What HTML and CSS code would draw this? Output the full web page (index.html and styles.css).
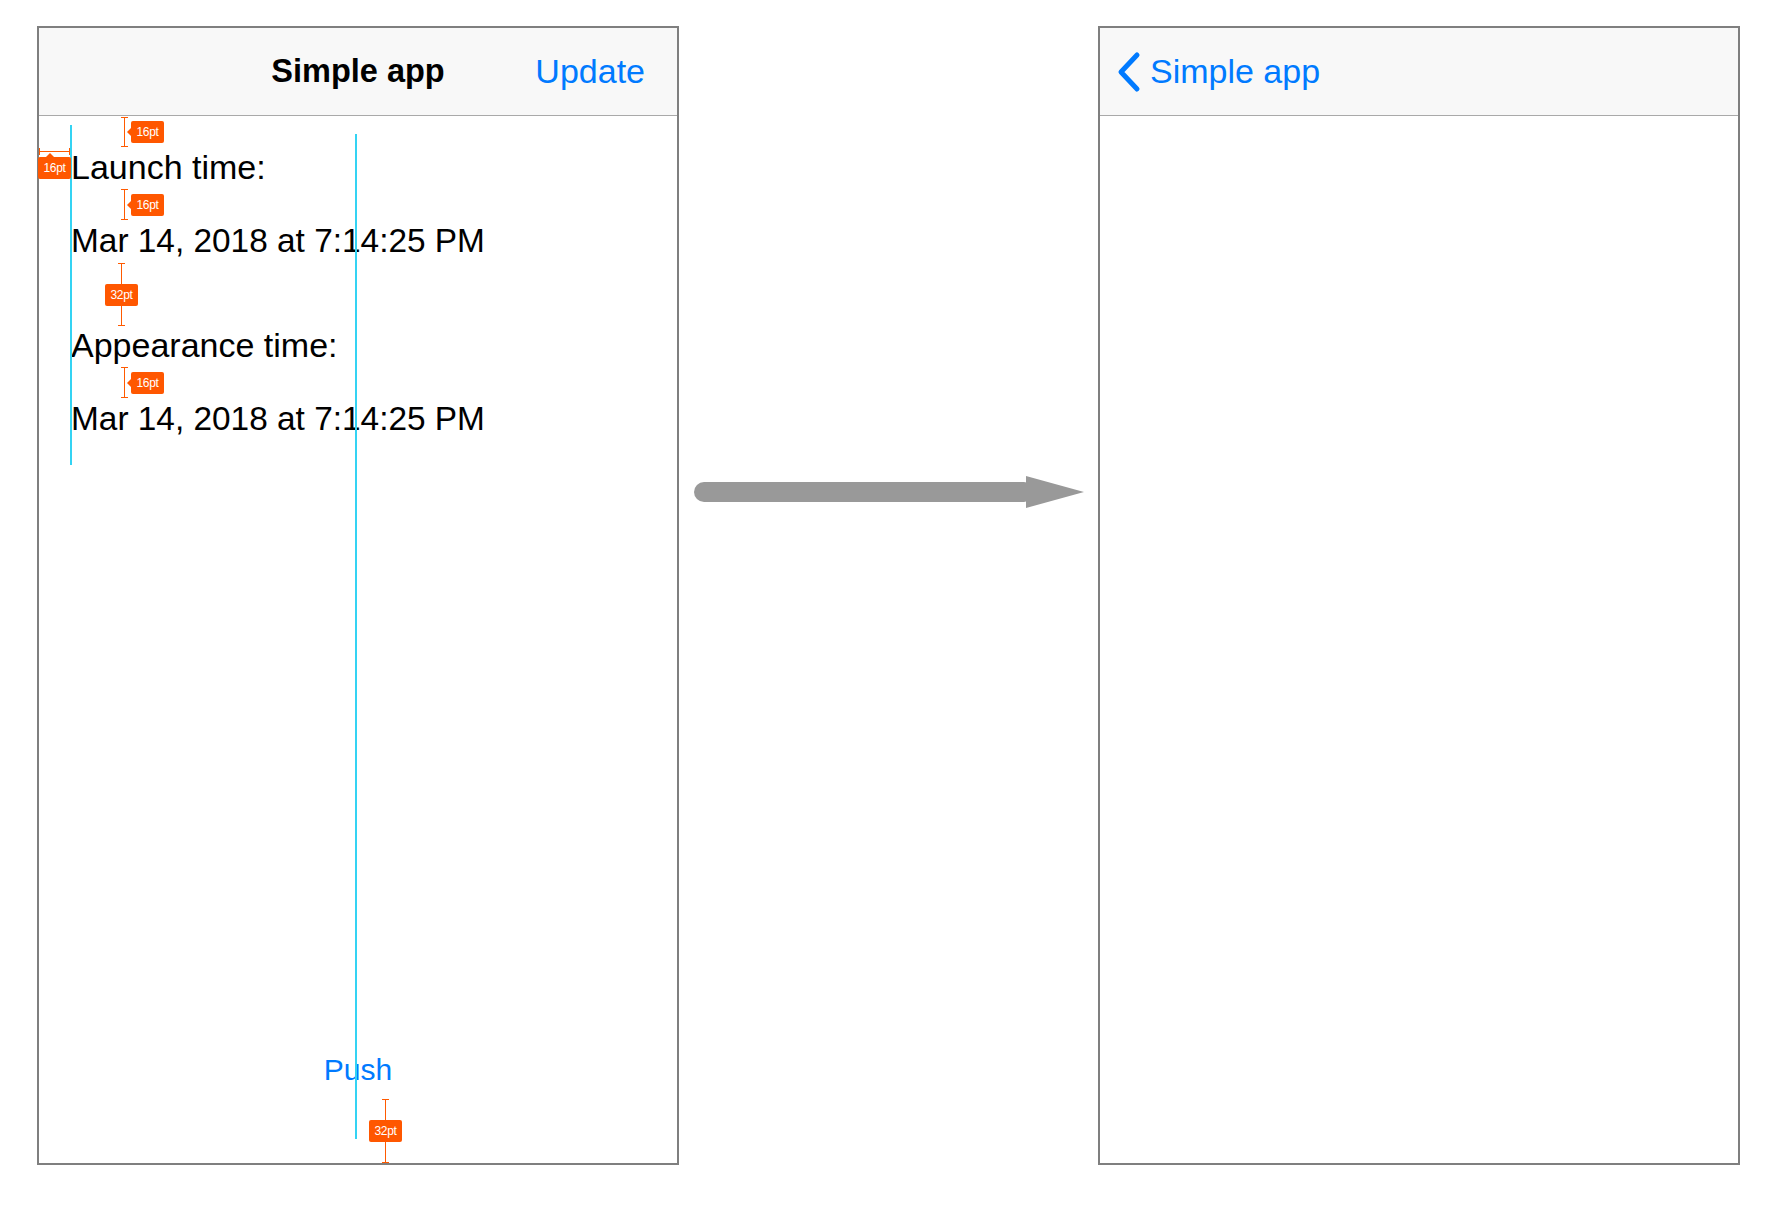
FILE: index.html
```html
<!DOCTYPE html>
<html lang="en">
<head>
<meta charset="utf-8">
<title>Simple app</title>
<link rel="stylesheet" href="styles.css">
</head>
<body>
<div class="stage">
  <div class="phone">
    <div class="screen">
      <header class="nav">
        <span class="nav-side"></span>
        <span class="nav-title">Simple app</span>
        <span class="nav-action">Update</span>
      </header>
      <main class="content">
        <div class="label">Launch time:</div>
        <div class="label value gap16">Mar 14, 2018 at 7:14:25 PM</div>
        <div class="label gap32">Appearance time:</div>
        <div class="label value gap16">Mar 14, 2018 at 7:14:25 PM</div>
      </main>
      <div class="push-row"><span class="push">Push</span></div>

      <div class="guide guide-stack"></div>
      <div class="guide guide-center"></div>

      <div class="vmark m-a"></div>
      <div class="badge badge-left b-a">16pt</div>
      <div class="hmark m-b"></div>
      <div class="badge badge-up b-b">16pt</div>
      <div class="vmark m-c"></div>
      <div class="badge badge-left b-c">16pt</div>
      <div class="vmark m-d"></div>
      <div class="badge b-d">32pt</div>
      <div class="vmark m-e"></div>
      <div class="badge badge-left b-e">16pt</div>
      <div class="vmark m-f"></div>
      <div class="badge b-f">32pt</div>
    </div>
  </div>

  <div class="arrow-col">
    <svg class="arrow" width="419" height="40" viewBox="0 0 419 40">
      <rect x="15" y="10" width="340" height="20" rx="10" fill="#999999"/>
      <polygon points="347,4 405,20 347,36" fill="#999999"/>
    </svg>
  </div>

  <div class="phone">
    <div class="screen">
      <header class="nav nav-back">
        <svg class="chevron" width="26" height="42" viewBox="0 0 26 42">
          <path d="M21 4 L5 21 L21 38" fill="none" stroke="#007aff" stroke-width="5" stroke-linecap="round" stroke-linejoin="round"/>
        </svg>
        <span class="back-text">Simple app</span>
      </header>
    </div>
  </div>
</div>
</body>
</html>
```
FILE: styles.css
```css
html, body {
  margin: 0;
  padding: 0;
  background: #ffffff;
}

body {
  font-family: "Liberation Sans", Arial, sans-serif;
  color: #000000;
}

.stage {
  display: flex;
  align-items: flex-start;
  padding: 26px 0 0 37px;
}

.phone {
  width: 638px;
  height: 1135px;
  border: 2px solid #7f7f7f;
  background: #ffffff;
  flex: none;
}

.screen {
  position: relative;
  height: 100%;
  display: flex;
  flex-direction: column;
}

.nav {
  box-sizing: border-box;
  height: 88px;
  background: #f8f8f8;
  border-bottom: 1px solid #a9a9a9;
  display: grid;
  grid-template-columns: 1fr auto 1fr;
  align-items: center;
  line-height: 87px;
  flex: none;
}

.nav-title {
  font-weight: bold;
  font-size: 32.5px;
  color: #000000;
}

.nav-action {
  justify-self: end;
  padding-right: 32px;
  font-size: 34px;
  color: #007aff;
}

.nav-back {
  display: flex;
  align-items: center;
  padding-left: 16px;
}

.chevron {
  display: block;
  flex: none;
}

.back-text {
  margin-left: 8px;
  font-size: 34px;
  color: #007aff;
}

.content {
  flex: 1;
  padding: 31px 32px 0 32px;
}

.label {
  font-size: 34px;
  line-height: 41px;
  height: 41px;
  white-space: nowrap;
}

.label.value {
  font-size: 33.4px;
}

.gap16 { margin-top: 32px; }
.gap32 { margin-top: 64px; }

.push-row {
  display: flex;
  justify-content: center;
  margin-bottom: 63px;
  flex: none;
}

.push {
  font-size: 30px;
  line-height: 60px;
  color: #007aff;
}

/* layout guides overlay */
.guide {
  position: absolute;
  width: 2px;
  background: #34d3f3;
}

.guide-stack { left: 31px; top: 97px; height: 340px; }
.guide-center { left: 316px; top: 106px; height: 1005px; }

.vmark {
  position: absolute;
  width: 1px;
  background: #ff5a00;
}

.vmark::before,
.vmark::after {
  content: "";
  position: absolute;
  left: -3px;
  width: 7px;
  height: 1px;
  background: #ff5a00;
}

.vmark::before { top: 0; }
.vmark::after { bottom: 0; }

.hmark {
  position: absolute;
  height: 1px;
  background: #ff5a00;
}

.hmark::before,
.hmark::after {
  content: "";
  position: absolute;
  top: -3px;
  width: 1px;
  height: 7px;
  background: #ff5a00;
}

.hmark::before { left: 0; }
.hmark::after { right: 0; }

.badge {
  position: absolute;
  width: 33px;
  height: 22px;
  border-radius: 2px;
  background: #ff5700;
  color: #ffffff;
  font-size: 12px;
  line-height: 22px;
  text-align: center;
  letter-spacing: -0.3px;
}

.badge-left::before {
  content: "";
  position: absolute;
  left: -4px;
  top: 7px;
  border-top: 4px solid transparent;
  border-bottom: 4px solid transparent;
  border-right: 4px solid #ff5700;
}

.badge-up::before {
  content: "";
  position: absolute;
  top: -4px;
  left: 8px;
  border-left: 4px solid transparent;
  border-right: 4px solid transparent;
  border-bottom: 4px solid #ff5700;
}

.m-a { left: 85px; top: 89px; height: 30px; }
.b-a { left: 92px; top: 93px; }

.m-b { left: 0; top: 123px; width: 31px; }
.b-b { left: -1px; top: 129px; }

.m-c { left: 85px; top: 161px; height: 31px; }
.b-c { left: 92px; top: 166px; }

.m-d { left: 82px; top: 235px; height: 63px; }
.b-d { left: 66px; top: 256px; }

.m-e { left: 85px; top: 339px; height: 31px; }
.b-e { left: 92px; top: 344px; }

.m-f { left: 346px; top: 1071px; height: 64px; }
.b-f { left: 330px; top: 1092px; }

.arrow-col {
  width: 419px;
  flex: none;
  padding-top: 446px;
}

.arrow {
  display: block;
}
```
